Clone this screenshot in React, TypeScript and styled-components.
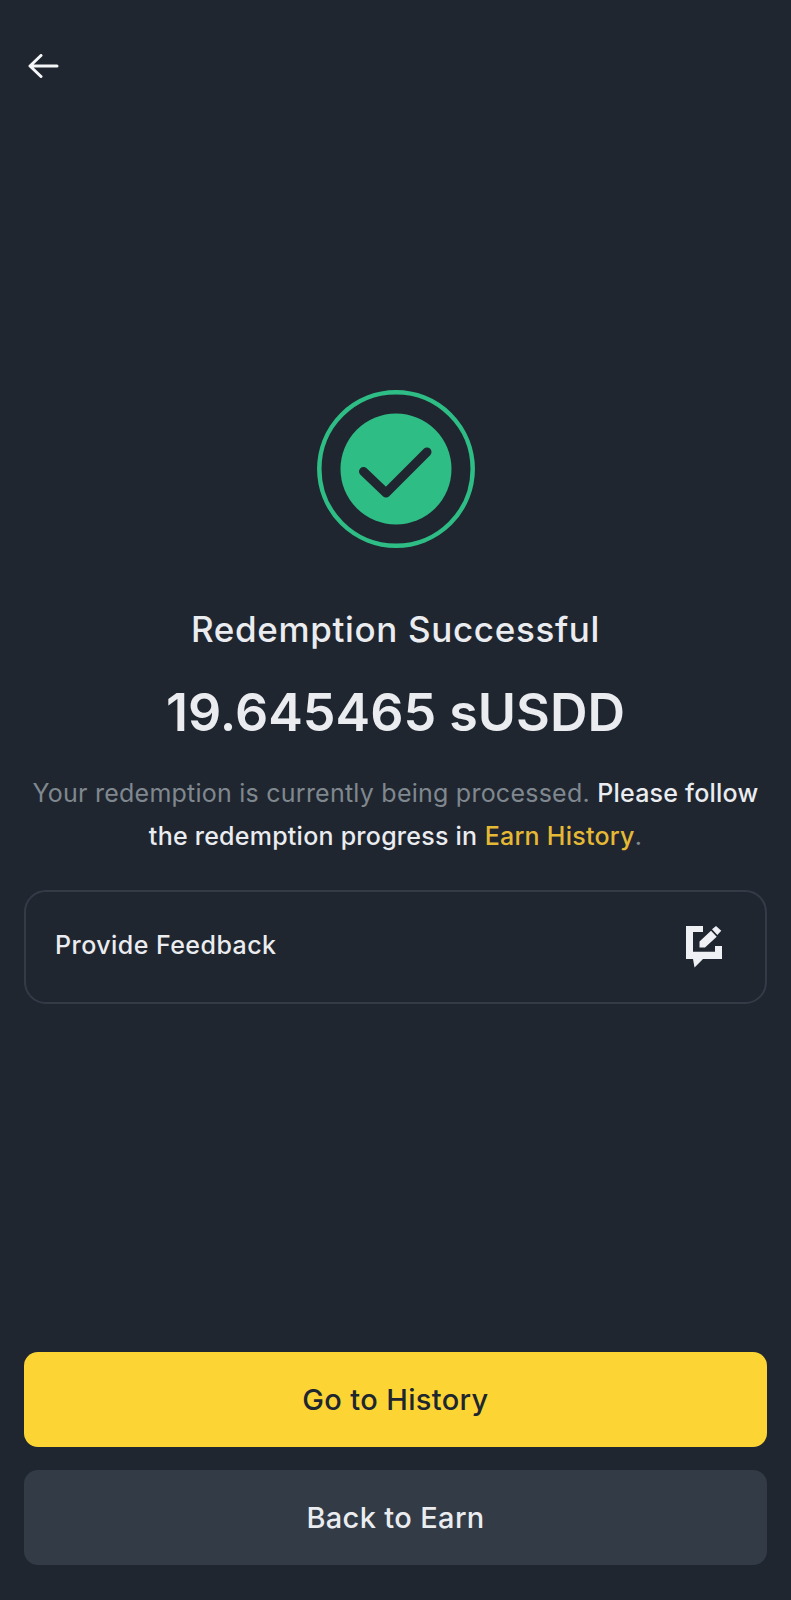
import React from 'react';
import styled, { createGlobalStyle } from 'styled-components';

const GlobalStyle = createGlobalStyle`
  html, body {
    margin: 0;
    padding: 0;
    background: #1f2630;
  }
`;

// Styles
const Page = styled.div`
  display: flex;
  flex-direction: column;
  box-sizing: border-box;
  width: 791px;
  height: 1600px;
  padding: 54px 24px 35px;
  background: #1f2630;
  font-family: Inter, 'Noto Sans', sans-serif;
  color: #eaecef;
`;

const BackButton = styled.button`
  display: block;
  width: 32px;
  height: 24px;
  padding: 0;
  margin-left: 4px;
  border: 0;
  background: none;
  color: #f5f6f8;
`;

const Result = styled.div`
  display: flex;
  flex-direction: column;
  align-items: center;
  margin-top: 312px;
`;

const StatusIcon = styled.svg`
  display: block;
  width: 158px;
  height: 158px;
`;

const Title = styled.h1`
  margin: 59px 0 0;
  font-size: 35px;
  line-height: 44px;
  font-weight: 500;
  letter-spacing: 0.65px;
  color: #eaecef;
`;

const Amount = styled.div`
  margin-top: 32px;
  font-size: 52px;
  line-height: 60px;
  font-weight: 600;
  color: #eaecef;
`;

const Message = styled.p`
  margin: 29px 0 0;
  font-size: 25px;
  line-height: 43px;
  font-weight: 400;
  letter-spacing: 0.24px;
  text-align: center;
  color: #80888f;

  strong {
    font-weight: 500;
    color: #eaecef;
  }

  em {
    font-style: normal;
    font-weight: 500;
    color: #e5b935;
  }
`;

const FeedbackCard = styled.div`
  display: flex;
  align-items: center;
  justify-content: space-between;
  box-sizing: border-box;
  height: 114px;
  margin-top: 32px;
  padding: 0 43px 0 29px;
  border: 2px solid #343b47;
  border-radius: 22px;
  font-size: 25px;
  font-weight: 500;
  letter-spacing: 0.45px;
`;

const FeedbackLabel = styled.span`
  padding-bottom: 4px;
`;

const Actions = styled.div`
  display: flex;
  flex-direction: column;
  gap: 23px;
  margin-top: auto;
`;

const ActionButton = styled.button<{ $primary?: boolean }>`
  height: 95px;
  padding: 0;
  border: 0;
  border-radius: 14px;
  font-family: inherit;
  font-size: 29px;
  font-weight: 500;
  letter-spacing: 0.35px;
  background: ${(p) => (p.$primary ? '#fcd535' : '#333b47')};
  color: ${(p) => (p.$primary ? '#202630' : '#eaecef')};
`;

const App: React.FC = () => {
  return (
    <Page>
      <GlobalStyle />
      <BackButton aria-label="Back">
        <svg width="32" height="24" viewBox="0 0 32 24" fill="none">
          <path
            d="M13 1.5 2 12l11 10.5M2.5 12H29"
            stroke="currentColor"
            strokeWidth="3"
            strokeLinecap="round"
            strokeLinejoin="round"
          />
        </svg>
      </BackButton>

      <Result>
        <StatusIcon viewBox="0 0 158 158" fill="none">
          <circle cx="79" cy="79" r="76.700" stroke="#2ebd85" strokeWidth="4.500" />
          <circle cx="79" cy="79" r="55.500" fill="#2ebd85" />
          <path
            d="M46.500 81.500 69 103l41-41"
            stroke="#1f2630"
            strokeWidth="9"
            strokeLinecap="round"
            strokeLinejoin="round"
          />
        </StatusIcon>
        <Title>Redemption Successful</Title>
        <Amount>19.645465 sUSDD</Amount>
        <Message>
          Your redemption is currently being processed. <strong>Please follow</strong>
          <br />
          <strong>the redemption progress in</strong> <em>Earn History</em>.
        </Message>
      </Result>

      <FeedbackCard>
        <FeedbackLabel>Provide Feedback</FeedbackLabel>
        <svg width="36" height="42" viewBox="0 0 36 42" fill="#eef0f4">
          <path d="M0 0h17v6H7v19.700h22V20h7v13H17l-8.500 8.500L7 33H0z" />
          <path d="M13.500 15.500 25 4.700l5.700 6L19 21.500h-5.500zM26 3.300 30 0l5.300 4.700-4 4.300z" />
        </svg>
      </FeedbackCard>

      <Actions>
        <ActionButton $primary>Go to History</ActionButton>
        <ActionButton>Back to Earn</ActionButton>
      </Actions>
    </Page>
  );
};

export default App;
